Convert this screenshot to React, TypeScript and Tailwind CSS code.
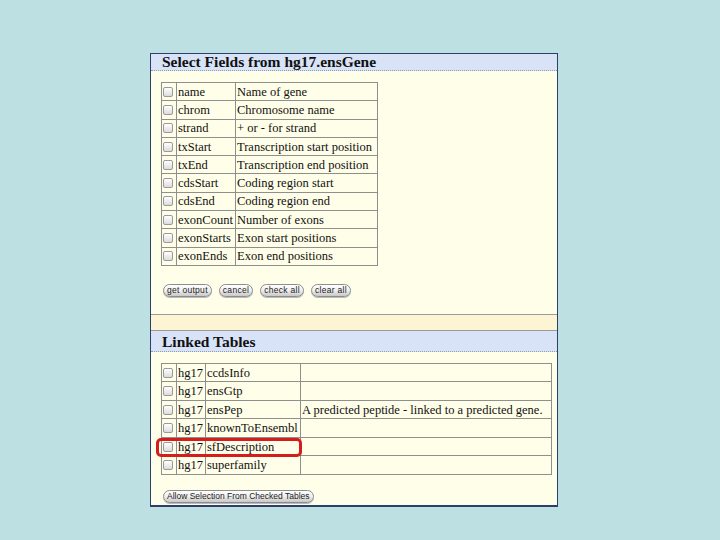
import React from "react";

const fields: [string, string][] = [
  ["name", "Name of gene"],
  ["chrom", "Chromosome name"],
  ["strand", "+ or - for strand"],
  ["txStart", "Transcription start position"],
  ["txEnd", "Transcription end position"],
  ["cdsStart", "Coding region start"],
  ["cdsEnd", "Coding region end"],
  ["exonCount", "Number of exons"],
  ["exonStarts", "Exon start positions"],
  ["exonEnds", "Exon end positions"],
];

const linked: [string, string][] = [
  ["ccdsInfo", ""],
  ["ensGtp", ""],
  ["ensPep", "A predicted peptide - linked to a predicted gene."],
  ["knownToEnsembl", ""],
  ["sfDescription", ""],
  ["superfamily", ""],
];

function Box() {
  return (
    <span className="block h-[10px] w-[10px] rounded-[2px] border border-[#9a9a9a] bg-gradient-to-b from-white to-[#dcdcdc]" />
  );
}

function Btn({ label, track = "tracking-[0.3px]" }: { label: string; track?: string }) {
  return (
    <button
      className={`h-[13px] rounded-full border border-[#8d8d8d] bg-gradient-to-b from-white via-[#eeeeee] to-[#c8c8c8] px-[3px] font-['Liberation_Sans',sans-serif] text-[8.5px] leading-[11px] ${track} text-[#222] shadow-[0_1px_0_#bbb]`}
    >
      {label}
    </button>
  );
}

function Header({ title, h }: { title: string; h: string }) {
  return (
    <div
      className={`${h} border-b border-dotted border-[#8f9bb3] bg-[#d8e3f7] pl-[11px] font-['Liberation_Serif',serif] text-[15.5px] font-bold leading-[15px] text-[#111]`}
    >
      {title}
    </div>
  );
}

const cell = "border border-[#8f8f8f] p-0 pl-[1px] align-middle leading-[16px] whitespace-nowrap overflow-hidden";

export default function App() {
  return (
    <div className="h-[540px] w-[720px] overflow-hidden bg-[#bde0e3] pl-[150px] pt-[53px]">
      <div className="w-[408px] border border-b-2 border-[#2e3c6e] bg-[#fffee8] font-['Liberation_Serif',serif] text-[12.5px] text-[#111]">
        <Header title="Select Fields from hg17.ensGene" h="h-[17px]" />
        <div className="border-b border-[#9a9a9a] pb-[17px] pl-[10px] pt-[11px]">
          <table className="w-[216px] table-fixed border-collapse border border-[#8a8a8a]">
            <colgroup>
              <col className="w-[15px]" />
              <col className="w-[59px]" />
              <col className="w-[142px]" />
            </colgroup>
            <tbody>
              {fields.map(([n, d]) => (
                <tr key={n}>
                  <td className={`${cell} h-[18.3px]`}>
                    <Box />
                  </td>
                  <td className={cell}>{n}</td>
                  <td className={cell}>{d}</td>
                </tr>
              ))}
            </tbody>
          </table>
          <div className="mt-[18px] flex gap-[7px] pl-[2px]">
            <Btn label="get output" />
            <Btn label="cancel" />
            <Btn label="check all" />
            <Btn label="clear all" />
          </div>
        </div>
        <div className="h-[16px] border-b border-[#9a9a9a] bg-[#fdf4d3]" />
        <Header title="Linked Tables" h="h-[21px] pt-[3px]" />
        <div className="pb-[2px] pl-[10px] pt-[11px]">
          <div className="relative">
            <table className="w-[390px] table-fixed border-collapse border border-[#8a8a8a]">
              <colgroup>
                <col className="w-[15px]" />
                <col className="w-[29px]" />
                <col className="w-[95px]" />
                <col className="w-[251px]" />
              </colgroup>
              <tbody>
                {linked.map(([n, d]) => (
                  <tr key={n}>
                    <td className={`${cell} h-[18.5px]`}>
                      <Box />
                    </td>
                    <td className={cell}>hg17</td>
                    <td className={cell}>{n}</td>
                    <td className={cell}>{d}</td>
                  </tr>
                ))}
              </tbody>
            </table>
            <div className="pointer-events-none absolute left-[-5px] top-[75px] h-[19px] w-[146px] rounded-[5px] border-[3px] border-[#d41e1e]" />
          </div>
          <div className="mt-[15px] flex pl-[2px]">
            <Btn label="Allow Selection From Checked Tables" track="tracking-[0px]" />
          </div>
        </div>
      </div>
    </div>
  );
}
